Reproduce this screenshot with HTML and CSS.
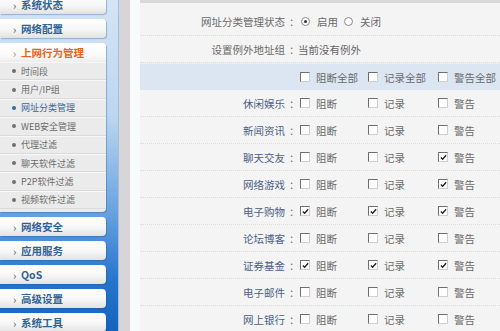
FILE: index.html
```html
<!DOCTYPE html>
<html lang="zh-CN">
<head>
    <meta charset="UTF-8">
    <title>网址分类管理</title>
    <link rel="stylesheet" href="styles.css">
</head>
<body>
    <div class="page">
        <aside class="sidebar">
            <div class="menu">
                <div class="menu-btn"><span class="arrow">›</span>系统状态</div>
                <div class="menu-btn"><span class="arrow">›</span>网络配置</div>
                <div class="menu-group">
                    <div class="menu-btn active"><span class="arrow">›</span>上网行为管理</div>
                    <ul class="submenu">
                        <li>时间段</li>
                        <li>用户/IP组</li>
                        <li class="current">网址分类管理</li>
                        <li>WEB安全管理</li>
                        <li>代理过滤</li>
                        <li>聊天软件过滤</li>
                        <li>P2P软件过滤</li>
                        <li>视频软件过滤</li>
                    </ul>
                </div>
                <div class="menu-btn"><span class="arrow">›</span>网络安全</div>
                <div class="menu-btn"><span class="arrow">›</span>应用服务</div>
                <div class="menu-btn"><span class="arrow">›</span>QoS</div>
                <div class="menu-btn"><span class="arrow">›</span>高级设置</div>
                <div class="menu-btn"><span class="arrow">›</span>系统工具</div>
            </div>
        </aside>
        <div class="divider"></div>
        <div class="spacer"></div>

        <main class="content">
            <div class="row">
                <span class="label">网址分类管理状态<span class="colon">：</span></span>
                <span class="span-all">
                    <span class="radio on"></span><span class="opt">启用</span>
                    <span class="radio"></span><span class="opt">关闭</span>
                </span>
            </div>
            <div class="row">
                <span class="label">设置例外地址组<span class="colon">：</span></span>
                <span class="span-all value">当前没有例外</span>
            </div>
            <div class="row head">
                <span></span>
                <span class="cell"><span class="cb"></span>阻断全部</span>
                <span class="cell"><span class="cb"></span>记录全部</span>
                <span class="cell"><span class="cb"></span>警告全部</span>
            </div>

            <div class="row">
                <span class="label cat">休闲娱乐<span class="colon">：</span></span>
                <span class="cell"><span class="cb"></span>阻断</span>
                <span class="cell"><span class="cb"></span>记录</span>
                <span class="cell"><span class="cb"></span>警告</span>
            </div>
            <div class="row">
                <span class="label cat">新闻资讯<span class="colon">：</span></span>
                <span class="cell"><span class="cb"></span>阻断</span>
                <span class="cell"><span class="cb"></span>记录</span>
                <span class="cell"><span class="cb"></span>警告</span>
            </div>
            <div class="row">
                <span class="label cat">聊天交友<span class="colon">：</span></span>
                <span class="cell"><span class="cb"></span>阻断</span>
                <span class="cell"><span class="cb"></span>记录</span>
                <span class="cell"><span class="cb checked"><svg viewBox="0 0 8 8"><path d="M1 4 L3 6 L7 1.5"/></svg></span>警告</span>
            </div>
            <div class="row">
                <span class="label cat">网络游戏<span class="colon">：</span></span>
                <span class="cell"><span class="cb"></span>阻断</span>
                <span class="cell"><span class="cb"></span>记录</span>
                <span class="cell"><span class="cb checked"><svg viewBox="0 0 8 8"><path d="M1 4 L3 6 L7 1.5"/></svg></span>警告</span>
            </div>
            <div class="row">
                <span class="label cat">电子购物<span class="colon">：</span></span>
                <span class="cell"><span class="cb checked"><svg viewBox="0 0 8 8"><path d="M1 4 L3 6 L7 1.5"/></svg></span>阻断</span>
                <span class="cell"><span class="cb checked"><svg viewBox="0 0 8 8"><path d="M1 4 L3 6 L7 1.5"/></svg></span>记录</span>
                <span class="cell"><span class="cb checked"><svg viewBox="0 0 8 8"><path d="M1 4 L3 6 L7 1.5"/></svg></span>警告</span>
            </div>
            <div class="row">
                <span class="label cat">论坛博客<span class="colon">：</span></span>
                <span class="cell"><span class="cb"></span>阻断</span>
                <span class="cell"><span class="cb"></span>记录</span>
                <span class="cell"><span class="cb"></span>警告</span>
            </div>
            <div class="row">
                <span class="label cat">证券基金<span class="colon">：</span></span>
                <span class="cell"><span class="cb checked"><svg viewBox="0 0 8 8"><path d="M1 4 L3 6 L7 1.5"/></svg></span>阻断</span>
                <span class="cell"><span class="cb checked"><svg viewBox="0 0 8 8"><path d="M1 4 L3 6 L7 1.5"/></svg></span>记录</span>
                <span class="cell"><span class="cb checked"><svg viewBox="0 0 8 8"><path d="M1 4 L3 6 L7 1.5"/></svg></span>警告</span>
            </div>
            <div class="row">
                <span class="label cat">电子邮件<span class="colon">：</span></span>
                <span class="cell"><span class="cb"></span>阻断</span>
                <span class="cell"><span class="cb"></span>记录</span>
                <span class="cell"><span class="cb"></span>警告</span>
            </div>
            <div class="row">
                <span class="label cat">网上银行<span class="colon">：</span></span>
                <span class="cell"><span class="cb"></span>阻断</span>
                <span class="cell"><span class="cb"></span>记录</span>
                <span class="cell"><span class="cb"></span>警告</span>
            </div>
        </main>
    </div>
</body>
</html>
```

FILE: styles.css
```css
:root {
    --menu-text: #2f6396;
    --active: #e2661e;
    --sub-text: #6b6b6b;
    --label: #4d5f86;
    --text: #6a6a6a;
    --row-bg: #f4f4f4;
    --head-bg: #dce6f3;
}

* {
    box-sizing: border-box;
    margin: 0;
    padding: 0;
}

body {
    font-family: "Noto Sans CJK SC", "Noto Sans", sans-serif;
    width: 500px;
    height: 331px;
    overflow: hidden;
    background: #ffffff;
}

.page {
    display: flex;
    height: 331px;
}

/* Left menu */
.sidebar {
    width: 118px;
    flex-shrink: 0;
    background: linear-gradient(to bottom, #d3e5f5 0%, #bcd6f0 35%, #6ea6e2 62%, #2674cc 85%, #1563be 100%);
    overflow: hidden;
}

.menu {
    display: flex;
    flex-direction: column;
    gap: 5px;
    width: 106px;
    margin-top: -5px;
}

.menu-btn {
    height: 19px;
    display: flex;
    align-items: center;
    padding-left: 13px;
    font-size: 10.5px;
    font-weight: bold;
    color: var(--menu-text);
    background: linear-gradient(to bottom, #ffffff 0%, #f7f7f7 55%, #e2e2e2 100%);
    border-radius: 0 4px 4px 0;
    box-shadow: 1px 1px 1px rgba(40, 80, 140, 0.35);
}

.arrow {
    color: #555;
    font-weight: normal;
    width: 8px;
    font-size: 11px;
}

.menu-group {
    background: #ebebeb;
    border-radius: 0 4px 4px 0;
    box-shadow: 1px 1px 1px rgba(40, 80, 140, 0.35);
    padding-bottom: 3px;
}

.menu-btn.active {
    color: var(--active);
    box-shadow: none;
    background: linear-gradient(to bottom, #ffffff 0%, #f9f9f9 70%, #ececec 100%);
}

.menu-btn.active .arrow {
    color: var(--active);
}

.submenu {
    list-style: none;
}

.submenu li {
    height: 18.4px;
    display: flex;
    align-items: center;
    padding-left: 12px;
    font-size: 9px;
    color: var(--sub-text);
    border-top: 1px solid #f8f8f8;
    border-bottom: 1px solid #dadada;
}

.submenu li::before {
    content: "";
    width: 4px;
    height: 4px;
    border-radius: 50%;
    background: #707070;
    margin-right: 5px;
}

.submenu li.current {
    color: #2d6aa8;
}

.submenu li.current::before {
    background: #2d6aa8;
}

.divider {
    width: 12px;
    flex-shrink: 0;
    background: #d8d5d9;
    border-left: 1px solid #9fc0e2;
}

.spacer {
    width: 10px;
    flex-shrink: 0;
    background: #f9fafc;
}

/* Main area */
.content {
    flex: 1;
    background: var(--row-bg);
    border-top: 3px solid #d9d9d9;
    padding-top: 5px;
    font-size: 10.5px;
    color: var(--text);
}

.row {
    display: grid;
    grid-template-columns: 157px 68px 70px 1fr;
    align-items: center;
    height: 27px;
    border-bottom: 1px dotted #dcdcdc;
}

.row:first-child {
    height: 28px;
}

.row.head {
    background: var(--head-bg);
    border-bottom: none;
    border-top: 1px solid #e8eef6;
}

.label {
    text-align: right;
    color: var(--text);
    white-space: nowrap;
}

.label.cat {
    color: var(--label);
}

.colon {
    display: inline-block;
    margin-left: 4px;
    width: 8px;
    text-align: left;
    color: #777;
}

.span-all {
    grid-column: 2 / 5;
    display: flex;
    align-items: center;
}

.value {
    padding-left: 1px;
    color: #666;
}

.radio {
    width: 9px;
    height: 9px;
    border-radius: 50%;
    border: 1px solid #8a8a8a;
    background: #fff;
    margin-left: 4px;
    margin-right: 7px;
    position: relative;
}

.radio.on::after {
    content: "";
    position: absolute;
    left: 2px;
    top: 2px;
    width: 3px;
    height: 3px;
    border-radius: 50%;
    background: #333;
}

.opt {
    margin-right: 2px;
}

.cell {
    display: flex;
    align-items: center;
    padding-left: 3px;
    white-space: nowrap;
}

.cb {
    width: 10px;
    height: 10px;
    flex-shrink: 0;
    background: #fff;
    border: 1px solid;
    border-color: #6f6f6f #cfcfcf #cfcfcf #6f6f6f;
    margin-right: 6px;
    display: flex;
    align-items: center;
    justify-content: center;
}

.cb svg {
    width: 7px;
    height: 7px;
    fill: none;
    stroke: #222;
    stroke-width: 1.6;
}
```
